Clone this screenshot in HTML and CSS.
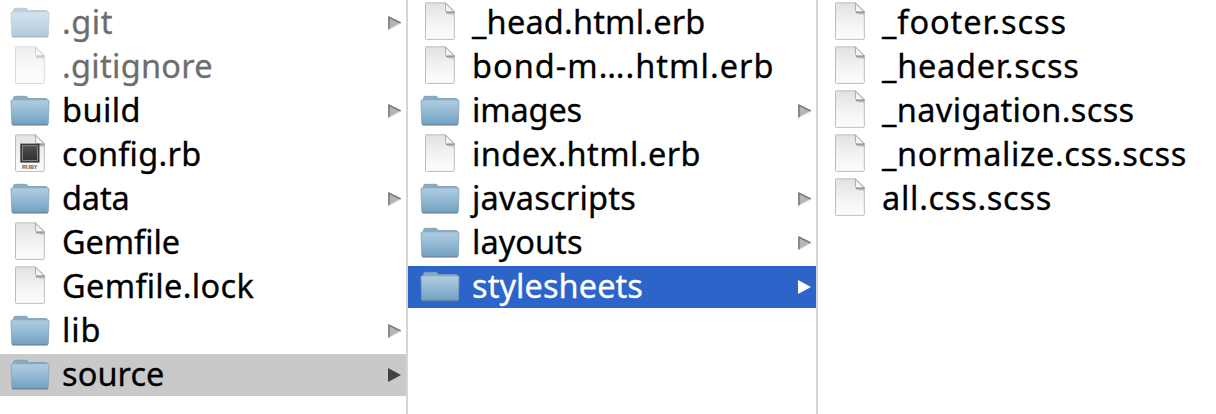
FILE: index.html
```
<!DOCTYPE html>
<html lang="en">
<head>
<meta charset="utf-8">
<title>Column browser</title>
<link rel="stylesheet" href="styles.css">
</head>
<body>
<svg class="defs" aria-hidden="true">
  <defs>
    <linearGradient id="folderFill" x1="0" y1="0" x2="0" y2="1">
      <stop offset="0" stop-color="#b0cde1"/><stop offset=".5" stop-color="#92b9d3"/><stop offset="1" stop-color="#6f9fc0"/>
    </linearGradient>
    <linearGradient id="pageFill" x1="0" y1="0" x2="0" y2="1">
      <stop offset="0" stop-color="#e2e2e2"/><stop offset=".55" stop-color="#f3f3f3"/><stop offset="1" stop-color="#fdfdfd"/>
    </linearGradient>
    <linearGradient id="foldFill" x1="0" y1="1" x2="1" y2="0">
      <stop offset="0" stop-color="#ffffff"/><stop offset="1" stop-color="#dcdcdc"/>
    </linearGradient>
    <linearGradient id="shadeFill" x1="0" y1="0" x2="0" y2="1">
      <stop offset="0" stop-color="#777"/><stop offset="1" stop-color="#bbb" stop-opacity="0"/>
    </linearGradient>
    <linearGradient id="chipFill" x1="0" y1="0" x2="0" y2="1">
      <stop offset="0" stop-color="#505050"/><stop offset="1" stop-color="#303030"/>
    </linearGradient>
    <symbol id="folder" viewBox="0 0 40 42">
      <path d="M3.5 12V8.2Q3.5 6.3 5.5 6.3H15.5Q17.4 6.3 18 8.5H35.8Q37.6 8.5 37.6 10.5V12Z" fill="#85acc7" stroke="#7b9bb0" stroke-width=".8"/>
      <path d="M1 11.2Q1 9.8 2.5 9.8H37.5Q39 9.8 39 11.2L38.3 33.5Q38.2 34.8 37 34.8H3Q1.9 34.8 1.8 33.5Z" fill="url(#folderFill)" stroke="#85a2b5" stroke-width=".8"/>
      <path d="M2.3 34.9H37.7" stroke="#5b7688" stroke-width="1"/>
    </symbol>
    <symbol id="page" viewBox="0 0 40 42">
      <path d="M6 .8H25.3L34.3 9.5V36.5Q34.3 37.4 33.4 37.4H6.4Q5.5 37.4 5.5 36.5V1.6Q5.5.8 6 .8Z" fill="url(#pageFill)" stroke="#bdbdbd" stroke-width="1"/>
      <path d="M25.8 9.5H34.4V14L26 11.5Z" fill="url(#shadeFill)"/>
      <path d="M25.4 1L34.3 9.8H27Q25.6 9.8 25.6 8.4Z" fill="url(#foldFill)" stroke="#9a9a9a" stroke-width=".8"/>
    </symbol>
    <symbol id="ruby" viewBox="0 0 40 42">
      <use href="#page"/>
      <rect x="10.3" y="9.6" width="19.2" height="19" fill="#383838"/>
      <rect x="12.4" y="11.7" width="15" height="14.8" fill="url(#chipFill)" stroke="#999" stroke-width=".8"/>
      <text x="19.8" y="35.3" text-anchor="middle" textLength="15.5" class="chip-label">RUBY</text>
    </symbol>
    <symbol id="arrow" viewBox="0 0 14 14">
      <path d="M.3.3L12.7 7 .3 13.7Z" fill="#b5b5b5"/>
      <path d="M1 13.5V1.1L12.7 7" fill="none" stroke="#787878" stroke-width="1.5"/>
      <path d="M1.5 13L12 7.4" stroke="#d5d5d5" stroke-width="1"/>
    </symbol>
    <symbol id="arrow-solid" viewBox="0 0 14 14"><path d="M0 0L13 7 0 14Z" fill="currentColor"/></symbol>
  </defs>
</svg>
<main class="browser">
  <ul class="column">
    <li class="row hidden-file"><svg class="icon"><use href="#folder"/></svg><span class="name" data-w="51">.git</span><svg class="arrow"><use href="#arrow"/></svg></li>
    <li class="row hidden-file"><svg class="icon"><use href="#page"/></svg><span class="name" data-w="151">.gitignore</span></li>
    <li class="row"><svg class="icon"><use href="#folder"/></svg><span class="name" data-w="79">build</span><svg class="arrow"><use href="#arrow"/></svg></li>
    <li class="row"><svg class="icon"><use href="#ruby"/></svg><span class="name" data-w="140">config.rb</span></li>
    <li class="row"><svg class="icon"><use href="#folder"/></svg><span class="name" data-w="67.5">data</span><svg class="arrow"><use href="#arrow"/></svg></li>
    <li class="row"><svg class="icon"><use href="#page"/></svg><span class="name" data-w="118">Gemfile</span></li>
    <li class="row"><svg class="icon"><use href="#page"/></svg><span class="name" data-w="192.5">Gemfile.lock</span></li>
    <li class="row"><svg class="icon"><use href="#folder"/></svg><span class="name" data-w="39.5">lib</span><svg class="arrow"><use href="#arrow"/></svg></li>
    <li class="row path"><svg class="icon"><use href="#folder"/></svg><span class="name" data-w="102.5">source</span><svg class="arrow"><use href="#arrow-solid"/></svg></li>
  </ul>
  <ul class="column">
    <li class="row"><svg class="icon"><use href="#page"/></svg><span class="name" data-w="233.5">_head.html.erb</span></li>
    <li class="row"><svg class="icon"><use href="#page"/></svg><span class="name" data-w="302.5">bond-m….html.erb</span></li>
    <li class="row"><svg class="icon"><use href="#folder"/></svg><span class="name" data-w="110">images</span><svg class="arrow"><use href="#arrow"/></svg></li>
    <li class="row"><svg class="icon"><use href="#page"/></svg><span class="name" data-w="229">index.html.erb</span></li>
    <li class="row"><svg class="icon"><use href="#folder"/></svg><span class="name" data-w="164">javascripts</span><svg class="arrow"><use href="#arrow"/></svg></li>
    <li class="row"><svg class="icon"><use href="#folder"/></svg><span class="name" data-w="110.5">layouts</span><svg class="arrow"><use href="#arrow"/></svg></li>
    <li class="row selected"><svg class="icon"><use href="#folder"/></svg><span class="name" data-w="171">stylesheets</span><svg class="arrow"><use href="#arrow-solid"/></svg></li>
  </ul>
  <ul class="column">
    <li class="row"><svg class="icon"><use href="#page"/></svg><span class="name" data-w="185">_footer.scss</span></li>
    <li class="row"><svg class="icon"><use href="#page"/></svg><span class="name" data-w="197.5">_header.scss</span></li>
    <li class="row"><svg class="icon"><use href="#page"/></svg><span class="name" data-w="252.5">_navigation.scss</span></li>
    <li class="row"><svg class="icon"><use href="#page"/></svg><span class="name" data-w="305">_normalize.css.scss</span></li>
    <li class="row"><svg class="icon"><use href="#page"/></svg><span class="name" data-w="170">all.css.scss</span></li>
  </ul>
</main>
<script src="names.js"></script>
</body>
</html>
```
FILE: styles.css
```
* { box-sizing: border-box; }
body { margin: 0; background: #fff; color: #000; font-family: "Noto Sans", "Open Sans", sans-serif; overflow: hidden; }
.defs { position: absolute; width: 0; height: 0; }
.browser { display: grid; grid-template-columns: 408px 410px 1fr; height: 414px; }
.column { margin: 0; padding: 2px 0 0; list-style: none; display: flex; flex-direction: column; gap: 2px; border-right: 2px solid #d6d6d6; }
.column:last-child { border-right: 0; }
.row { display: flex; align-items: center; height: 42px; padding: 0 4px 0 12px; }
.column:first-child .row { padding-left: 10px; }
.icon { width: 40px; height: 42px; flex: none; }
.name { margin-left: 12px; padding-bottom: 3px; font-size: 32.5px; line-height: 39px; white-space: nowrap; font-feature-settings: "liga" 1; -webkit-text-stroke: .3px currentColor; }
.arrow { width: 14px; height: 14px; margin-left: auto; flex: none; }
.hidden-file .icon { opacity: .55; }
.hidden-file .name { color: #6d6d6d; }
.path { background: #c9c9c9; }
.path .arrow { color: #414141; }
.selected { background: #2d64c9; color: #fff; }
.chip-label { font: 700 5.6px "Liberation Sans", sans-serif; fill: #555; }
```
FILE: names.js
```
// Track each name to its intended width.
document.querySelectorAll('.name').forEach(function (el) {
  var spare = Number(el.dataset.w) - el.getBoundingClientRect().width;
  el.style.letterSpacing = (spare / el.textContent.length).toFixed(3) + 'px';
});
```
